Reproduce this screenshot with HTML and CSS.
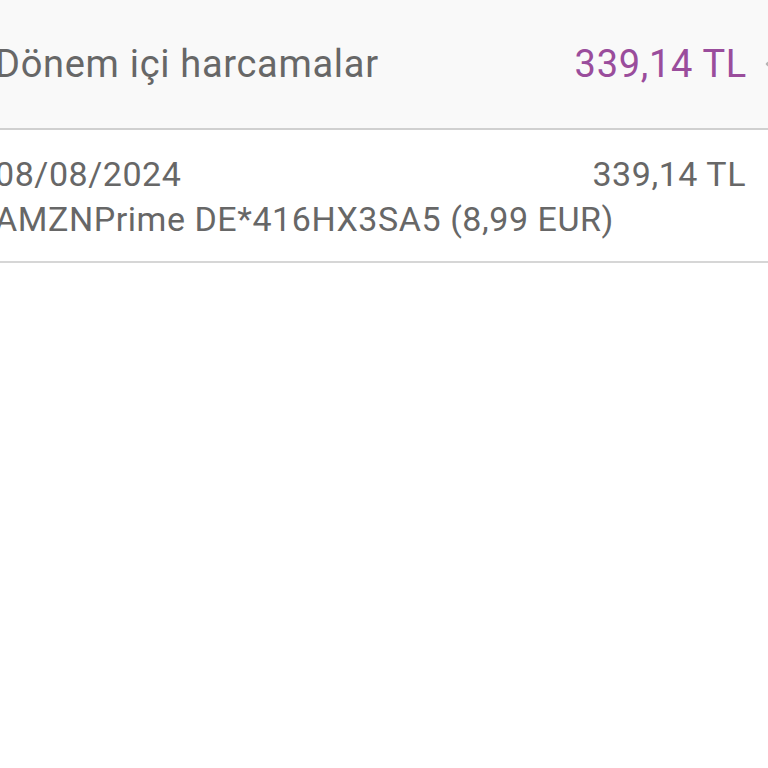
FILE: index.html
```html
<!DOCTYPE html>
<html lang="tr">

<head>
  <meta charset="UTF-8" />
  <meta name="viewport" content="width=device-width, initial-scale=1.0" />
  <title>Dönem içi harcamalar</title>
  <link rel="stylesheet" href="styles.css">
</head>

<body>
  <div class="statement">
    <div class="summary">
      <span class="summary-title">Dönem içi harcamalar</span>
      <span class="summary-amount">339,14 TL</span>
      <svg class="summary-toggle" width="20" height="20" viewBox="0 0 20 20">
        <path d="M14 3 L6 10 L14 17" fill="none" stroke="#b5b5b5" stroke-width="2.4" stroke-linecap="round" stroke-linejoin="round" />
      </svg>
    </div>

    <div class="transaction">
      <div class="transaction-line">
        <span>08/08/2024</span>
        <span class="transaction-amount">339,14 TL</span>
      </div>
      <div class="transaction-line">
        <span>AMZNPrime DE*416HX3SA5 (8,99 EUR)</span>
      </div>
    </div>
  </div>
</body>

</html>
```

FILE: styles.css
```css
html,
body {
  margin: 0;
  padding: 0;
  height: 100%;
}

body {
  font-family: Roboto, "Noto Sans", sans-serif;
  background-color: #fff;
  color: #676767;
  overflow: hidden;
}

.statement {
  /* screen is cropped, content starts slightly off the left edge */
  margin-left: -5px;
  margin-right: -30px;
}

.summary {
  display: flex;
  align-items: center;
  height: 128px;
  background-color: #f9f9f9;
  border-bottom: 2px solid #d0d0d0;
  font-size: 38px;
  letter-spacing: 0.7px;
}

.summary-title {
  flex: 1;
}

.summary-amount {
  color: #9a4d9c;
}

.summary-toggle {
  margin-left: 14px;
  margin-right: 17px;
  flex-shrink: 0;
}

.transaction {
  padding: 22px 52px 19px 0;
  border-bottom: 2px solid #d6d6d6;
  font-size: 34px;
  line-height: 45px;
  letter-spacing: 0.55px;
}

.transaction-line {
  display: flex;
  justify-content: space-between;
}
```
